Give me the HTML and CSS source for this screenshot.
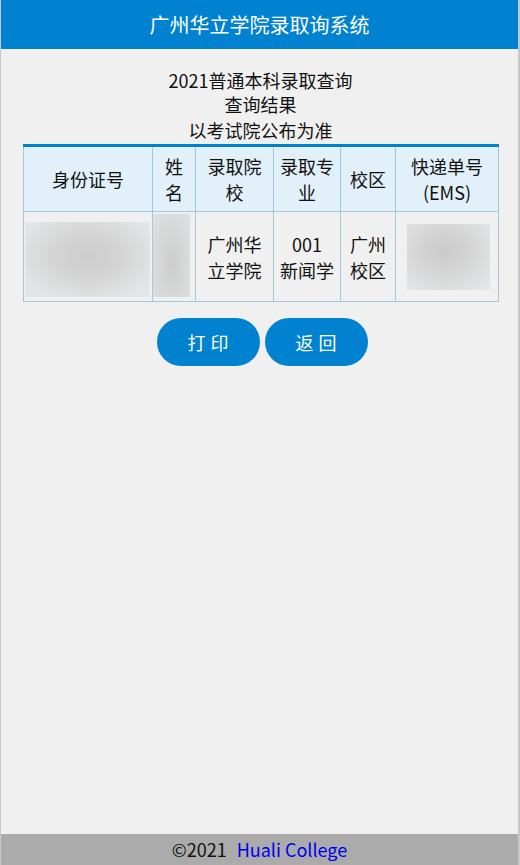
FILE: index.html
```html
<!DOCTYPE html>
<html lang="zh-CN">
<head>
<meta charset="utf-8">
<title>广州华立学院录取询系统</title>
<link rel="stylesheet" href="styles.css">
</head>
<body>
<div class="page">
  <header class="topbar">广州华立学院录取询系统</header>
  <main class="main">
    <div class="intro">
      <p class="line">2021普通本科录取查询</p>
      <p class="line">查询结果</p>
      <p class="line line-last">以考试院公布为准</p>
    </div>
    <table class="result">
      <colgroup>
        <col class="c1"><col class="c2"><col class="c3"><col class="c4"><col class="c5"><col class="c6">
      </colgroup>
      <thead>
        <tr>
          <th>身份证号</th>
          <th>姓<br>名</th>
          <th>录取院<br>校</th>
          <th>录取专<br>业</th>
          <th>校区</th>
          <th>快递单号<br>(EMS)</th>
        </tr>
      </thead>
      <tbody>
        <tr>
          <td class="blurcell"><div class="blur blur-id"></div></td>
          <td class="blurcell"><div class="blur blur-name"></div></td>
          <td>广州华<br>立学院</td>
          <td>001<br>新闻学</td>
          <td>广州<br>校区</td>
          <td class="blurcell"><div class="blur blur-ems"></div></td>
        </tr>
      </tbody>
    </table>
    <div class="actions">
      <button class="btn" type="button">打印</button>
      <button class="btn" type="button">返回</button>
    </div>
  </main>
  <footer class="footer"><span>©2021</span><a class="flink" href="#">Huali College</a></footer>
</div>
</body>
</html>
```
FILE: styles.css
```css
html, body {
  margin: 0;
  padding: 0;
  height: 100%;
}
body {
  font-family: "Noto Sans CJK SC", "Noto Sans", sans-serif;
  background: #f0f0f0;
  color: #111;
}
.page {
  box-sizing: border-box;
  min-height: 865px;
  display: flex;
  flex-direction: column;
  border-left: 1px solid #c8c8c8;
  border-right: 2px solid #c8c8c8;
  background: #f0f0f0;
}
.topbar {
  height: 49px;
  background: #0082d0;
  color: #fff;
  font-size: 20px;
  line-height: 49px;
  text-align: center;
}
.main {
  flex: 1;
  padding: 19px 20px 0 22px;
}
.intro {
  text-align: center;
  font-size: 18px;
}
.line {
  margin: 0;
  line-height: 24px;
}
.line-last {
  margin-top: 2px;
}
.result {
  width: 475px;
  margin: 2px 0 0 0;
  border-collapse: collapse;
  border-top: 3px solid #0082d0;
  table-layout: fixed;
  font-size: 18px;
}
.c1 { width: 129px; }
.c2 { width: 43px; }
.c3 { width: 78px; }
.c4 { width: 67px; }
.c5 { width: 55px; }
.c6 { width: 103px; }
.result th,
.result td {
  border: 1px solid #9fc9dc;
  text-align: center;
  vertical-align: middle;
  font-weight: normal;
  line-height: 26px;
  padding: 0;
}
.result thead th {
  background: #e2f0f9;
  height: 64px;
}
.result tbody td {
  height: 89px;
}
.result thead tr th {
  border-top: none;
}
.result td.blurcell {
  vertical-align: top;
}
.blur {
  background: radial-gradient(ellipse at 50% 45%, #cdcdcd 0%, #d3d3d3 35%, #e2e4e5 80%, #e4e6e7 100%);
}
.blur-id {
  width: 125px;
  height: 75px;
  margin: 10px 0 0 1px;
}
.blur-name {
  width: 37px;
  height: 83px;
  margin: 2px 0 0 0;
  background: radial-gradient(ellipse at 50% 60%, #cdcdcd 0%, #d4d5d5 40%, #dee1e3 100%);
}
.blur-ems {
  width: 83px;
  height: 66px;
  margin: 12px 0 0 11px;
  background: radial-gradient(ellipse at 45% 40%, #cbcbcb 0%, #d3d3d3 35%, #e2e4e5 85%, #e4e6e7 100%);
}
.actions {
  display: flex;
  justify-content: center;
  gap: 5px;
  margin-top: 16px;
  padding-left: 3px;
}
.btn {
  width: 103px;
  height: 48px;
  border: none;
  border-radius: 24px;
  background: #0082d0;
  color: #fff;
  font-family: "Noto Sans CJK SC", sans-serif;
  font-size: 18px;
  letter-spacing: 5px;
  padding: 0 0 0 5px;
}
.footer {
  height: 31px;
  background: #ababab;
  text-align: center;
  font-size: 18px;
  line-height: 31px;
  color: #111;
}
.flink {
  color: #0000ee;
  text-decoration: none;
  margin-left: 10px;
}
```
